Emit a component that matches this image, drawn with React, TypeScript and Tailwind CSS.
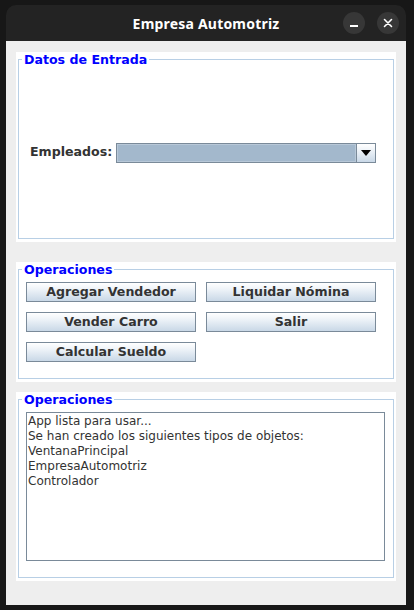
import React from 'react'

const font = { fontFamily: '"DejaVu Sans", Verdana, sans-serif' }

function Panel({ title, height, children }: { title: string; height: string; children: React.ReactNode }) {
  return (
    <section className={`bg-white px-[2px] ${height}`}>
      <fieldset className="h-[calc(100%-3px)] border border-[#b8cfe5]">
        <legend className="ml-[3px] px-[2px] text-[12.6px] font-bold leading-[15px] text-[#0000ff]">
          {title}
        </legend>
        {children}
      </fieldset>
    </section>
  )
}

function MetalButton({ label }: { label: string }) {
  return (
    <button
      type="button"
      className="h-[20px] w-[170px] border border-[#7a8a99] bg-[linear-gradient(to_bottom,#ffffff_0%,#eef3f8_35%,#c9d8e7_100%)] text-[12.6px] font-bold leading-[18px] text-[#333333]"
    >
      {label}
    </button>
  )
}

export default function App() {
  const log = [
    'App lista para usar...',
    'Se han creado los siguientes tipos de objetos:',
    'VentanaPrincipal',
    'EmpresaAutomotriz',
    'Controlador',
  ]

  return (
    <div className="flex h-[610px] w-[414px] flex-col bg-[#171717] pb-[5px] pl-[6px] pr-[8px] pt-[5px]" style={font}>
      <div className="flex flex-1 flex-col overflow-hidden rounded-t-[10px]">
        {/* title bar */}
        <header className="relative flex h-[36px] shrink-0 items-center justify-center bg-[#232323]">
          <h1 className="text-[14px] font-bold tracking-[0.2px] text-white" style={{ fontFamily: '"Noto Sans", sans-serif' }}>
            Empresa Automotriz
          </h1>
          <div className="absolute right-[7px] top-[7px] flex gap-[12px]">
            <span className="flex h-[22px] w-[22px] items-center justify-center rounded-full bg-[#373737]">
              <span className="mt-[6px] h-[2px] w-[8px] bg-white" />
            </span>
            <span className="flex h-[22px] w-[22px] items-center justify-center rounded-full bg-[#373737]">
              <svg width="10" height="10" viewBox="0 0 10 10" stroke="white" strokeWidth="1.6" strokeLinecap="round">
                <path d="M1.5 1.5 L8.5 8.5 M8.5 1.5 L1.5 8.5" />
              </svg>
            </span>
          </div>
        </header>

        {/* content */}
        <main className="flex flex-1 flex-col bg-[#eeeeee] px-[10px] pt-[11px]">
          <Panel title="Datos de Entrada" height="h-[190px]">
            <div className="flex h-[171px] items-center pl-[11px] pr-[17px]">
              <span className="text-[12.6px] font-bold text-[#333333]">Empleados:</span>
              <div className="ml-auto flex h-[20px] w-[260px] border border-[#7a8a99] bg-[#a3b8cc]">
                <div className="flex-1 border border-[#b8c8d8]" />
                <div className="flex w-[19px] items-center justify-center border-l border-[#7a8a99] bg-[linear-gradient(to_bottom,#ffffff_0%,#eef3f8_35%,#c9d8e7_100%)]">
                  <svg width="10" height="6" viewBox="0 0 10 6">
                    <path d="M0 0 H10 L5 6 Z" fill="#000" />
                  </svg>
                </div>
              </div>
            </div>
          </Panel>

          <div className="mt-[20px]">
            <Panel title="Operaciones" height="h-[120px]">
              <div className="grid grid-cols-[170px_170px] gap-[10px] pl-[7px] pt-[5px]">
                <MetalButton label="Agregar Vendedor" />
                <MetalButton label="Liquidar Nómina" />
                <MetalButton label="Vender Carro" />
                <MetalButton label="Salir" />
                <MetalButton label="Calcular Sueldo" />
              </div>
            </Panel>
          </div>

          <div className="mt-[10px]">
            <Panel title="Operaciones" height="h-[189px]">
              <div className="pl-[7px] pt-[5px]">
                <div className="h-[149px] w-[359px] border border-[#7a8a99] pl-[1px] pt-[1px] text-[12px] leading-[15px] text-[#333333]">
                  {log.map((line) => (
                    <div key={line}>{line}</div>
                  ))}
                </div>
              </div>
            </Panel>
          </div>
        </main>
      </div>
    </div>
  )
}
